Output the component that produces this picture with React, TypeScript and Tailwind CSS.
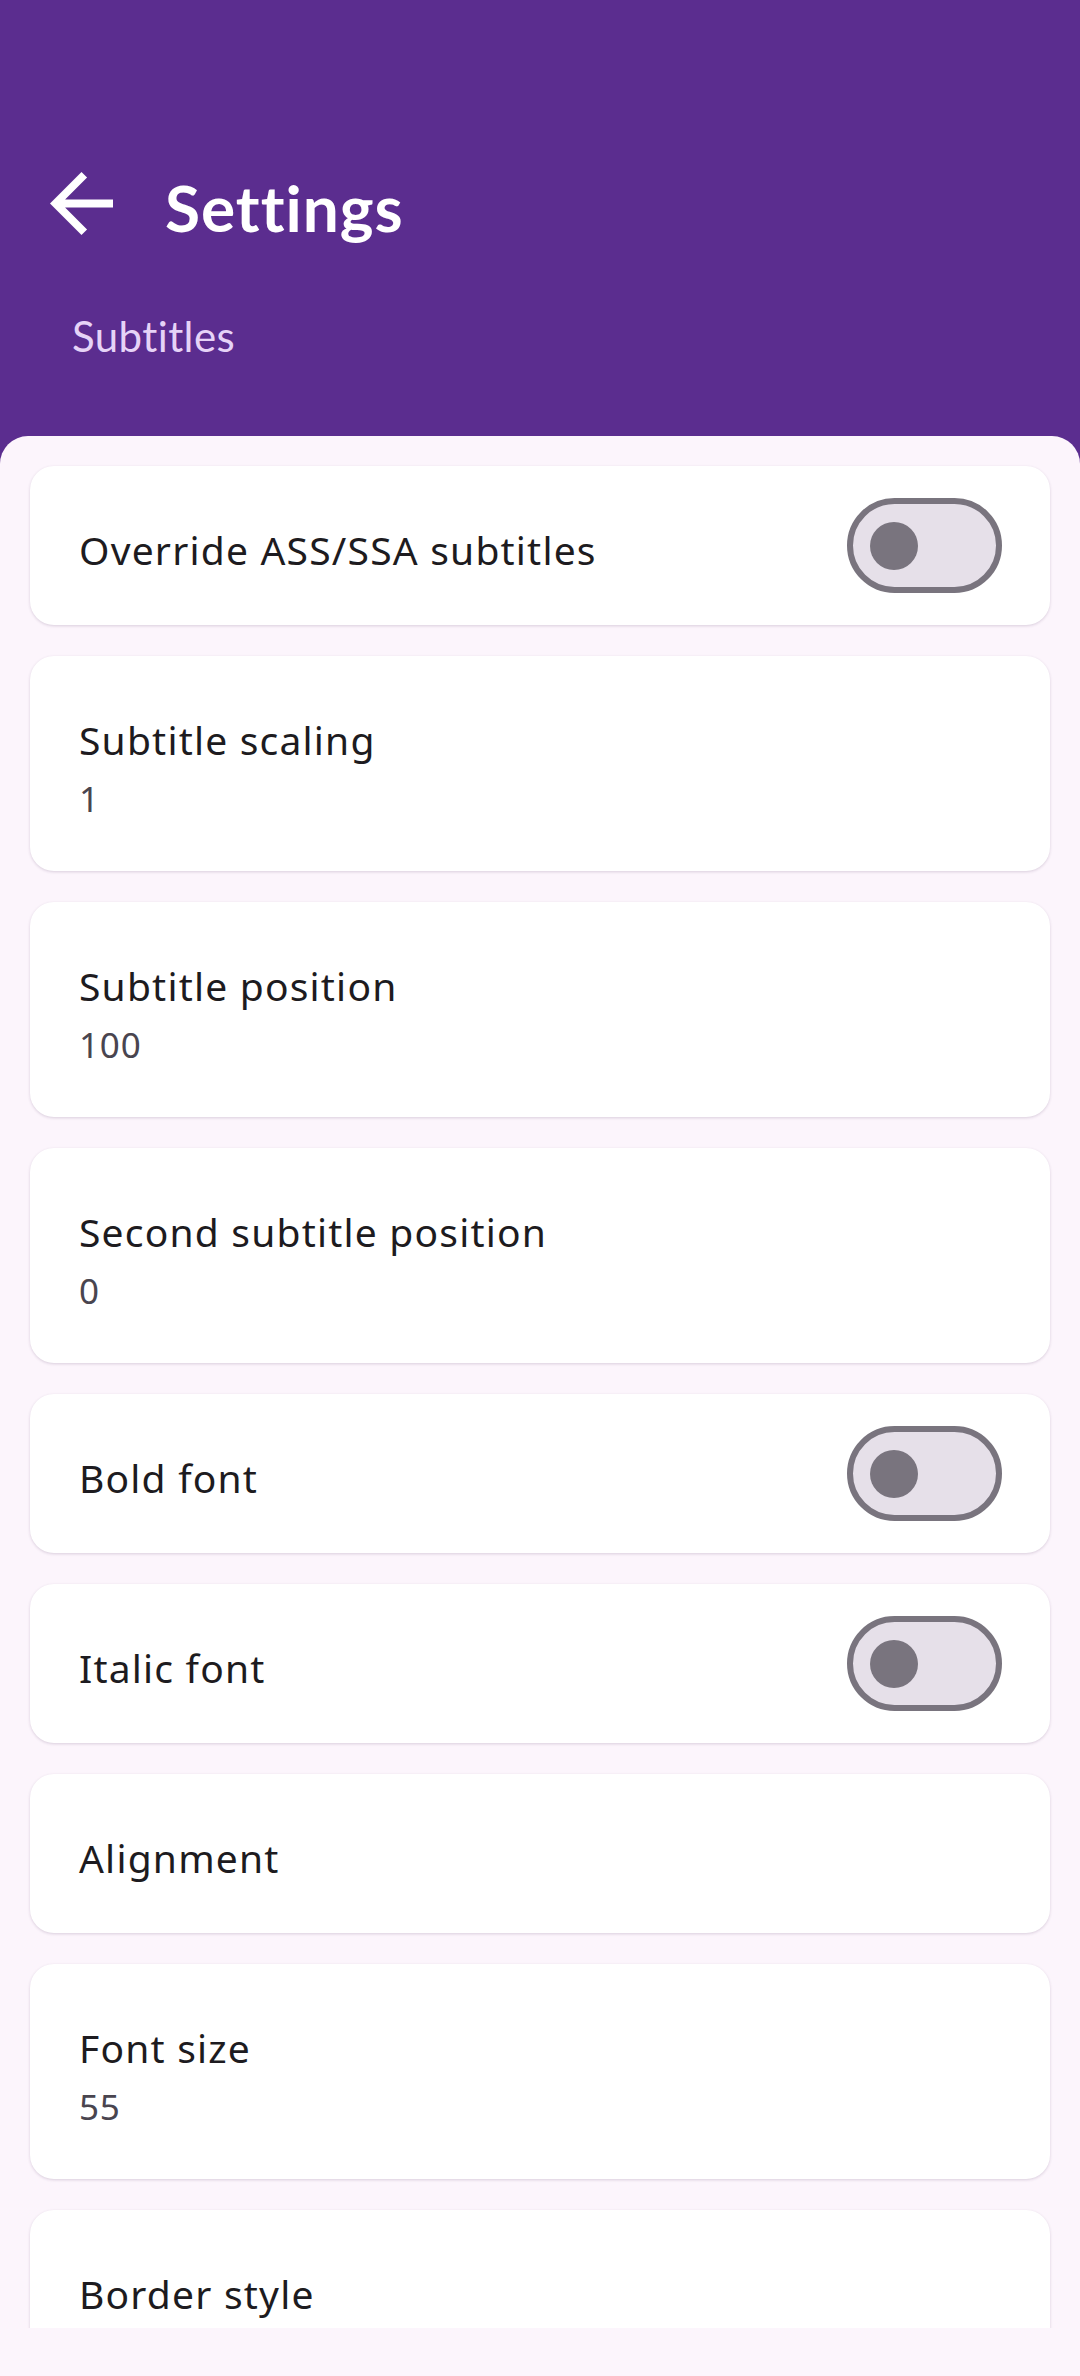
import React from "react";

type Pref = {
  title: string;
  value?: string;
  toggle?: boolean;
};

const prefs: Pref[] = [
  { title: "Override ASS/SSA subtitles", toggle: true },
  { title: "Subtitle scaling", value: "1" },
  { title: "Subtitle position", value: "100" },
  { title: "Second subtitle position", value: "0" },
  { title: "Bold font", toggle: true },
  { title: "Italic font", toggle: true },
  { title: "Alignment" },
  { title: "Font size", value: "55" },
  { title: "Border style" },
];

function Switch() {
  // switch desligado, estilo material 3
  return (
    <div className="flex h-[95px] w-[155px] shrink-0 items-center rounded-full border-[6px] border-[#79747e] bg-[#e6e0e9] pl-[17px]">
      <div className="h-[48px] w-[48px] rounded-full bg-[#79747e]" />
    </div>
  );
}

function PrefCard({ pref }: { pref: Pref }) {
  return (
    <div className="flex shrink-0 items-center rounded-[24px] bg-white pl-[49px] pr-[48px] shadow-[0_1px_3px_rgba(60,30,80,0.18)]">
      <div className="flex flex-1 flex-col pt-[58px] pb-[49px]">
        <span className="text-[39px] leading-[52px] tracking-[1.2px] text-[#1d1b20]">
          {pref.title}
        </span>
        {pref.value && (
          <span className="mt-[10px] text-[35px] leading-[46px] tracking-[0.8px] text-[#49454f]">
            {pref.value}
          </span>
        )}
      </div>
      {pref.toggle && <Switch />}
    </div>
  );
}

export default function App() {
  return (
    <div
      className="flex h-[2376px] w-[1080px] flex-col overflow-hidden bg-[#5b2d8f]"
      style={{ fontFamily: '"Noto Sans", sans-serif' }}
    >
      {/* cabeçalho roxo */}
      <header className="h-[436px] shrink-0 pt-[172px] font-['Lato',sans-serif]">
        <div className="flex items-start">
          <svg
            className="ml-[50px]"
            width="63"
            height="63"
            viewBox="4 4 16 16"
            fill="#ffffff"
          >
            <path d="M20 11H7.83l5.59-5.59L12 4l-8 8 8 8 1.41-1.41L7.83 13H20v-2z" />
          </svg>
          <h1 className="ml-[52px] mt-[4px] text-[64px] font-bold leading-[64px] tracking-[1px] text-white">
            Settings
          </h1>
        </div>
        <div className="ml-[72px] mt-[75px] text-[42px] leading-[42px] tracking-[0.4px] text-[#e6d3f7]">
          Subtitles
        </div>
      </header>

      {/* painel com a lista de preferencias */}
      <main className="flex flex-1 flex-col rounded-t-[28px] bg-[#fcf5fc]">
        <div className="flex h-[1892px] flex-col gap-[31px] overflow-hidden px-[30px] pt-[30px]">
          {prefs.map((p, i) => (
            <PrefCard key={i} pref={p} />
          ))}
        </div>
      </main>
    </div>
  );
}
